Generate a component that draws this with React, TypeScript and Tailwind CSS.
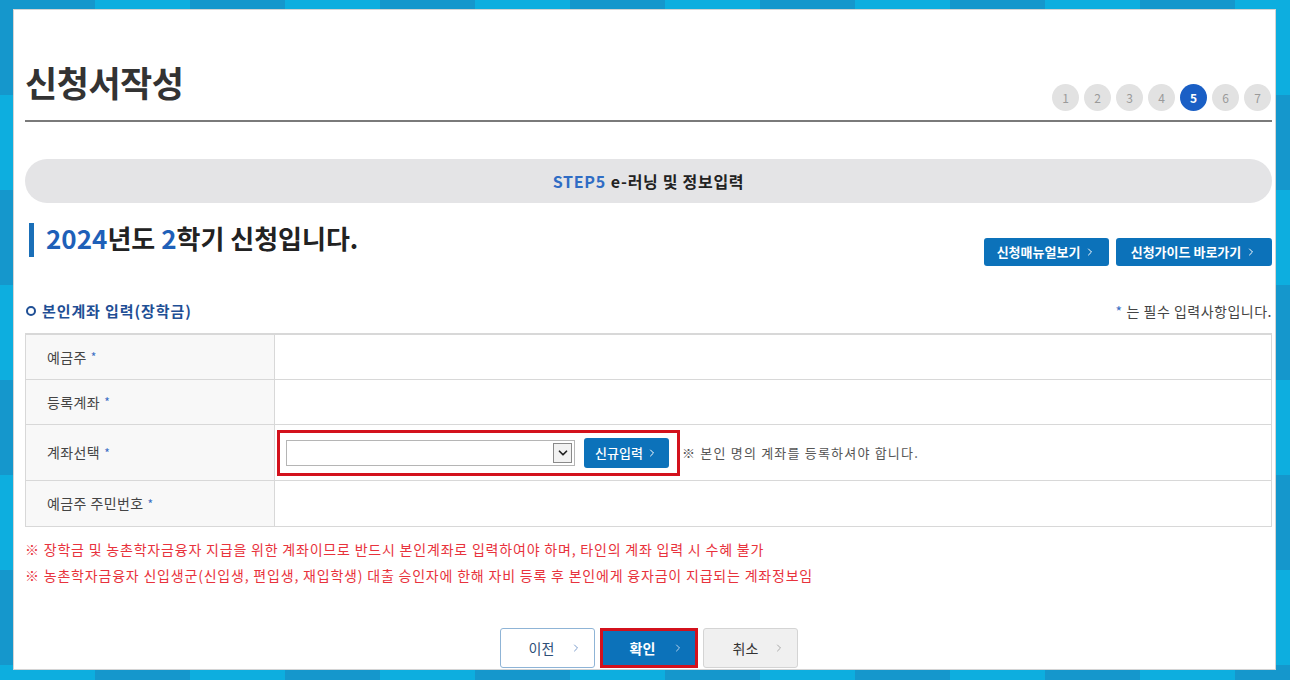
import { ChevronRight, ChevronDown } from 'lucide-react';

const steps = [1, 2, 3, 4, 5, 6, 7];

const rows = [
  { label: '예금주', h: 'h-[45px]' },
  { label: '등록계좌', h: 'h-[45px]' },
  { label: '계좌선택', h: 'h-[56px]', select: true },
  { label: '예금주 주민번호', h: 'h-[46px]' },
];

function Req() {
  return <span className="ml-1 text-[#3b6fc4] text-[12px]">*</span>;
}

export default function App() {
  return (
    <div
      className="w-[1290px] h-[680px] pt-[9px] pl-[13px] pr-[14px] pb-[10px] bg-[#1597cc] bg-[repeating-conic-gradient(#0daedf_0_25%,#1597cc_0_50%)] bg-[length:190px_190px]"
      style={{ fontFamily: '"Noto Sans CJK KR", "Noto Sans", sans-serif' }}
    >
      <div className="w-full h-full bg-white border border-[#d4d4d4] pl-[11px] pr-[3px] overflow-hidden">
        {/* Title */}
        <div className="mt-[52px] h-[60px] flex justify-between items-start border-b-2 border-[#7a7a7a]">
          <h1 className="text-[35px] leading-[40px] font-bold text-[#333] tracking-[-0.5px]">신청서작성</h1>
          <div className="mt-[22px] flex gap-[5px] pr-[1px]">
            {steps.map((s) => (
              <div
                key={s}
                className={`w-[27px] h-[27px] rounded-full flex items-center justify-center text-[12px] ${
                  s === 5 ? 'bg-[#1a5fc5] text-white font-bold' : 'bg-[#e2e2e2] text-[#9a9a9a]'
                }`}
              >
                {s}
              </div>
            ))}
          </div>
        </div>

        {/* Step bar */}
        <div className="mt-[37px] h-[44px] rounded-full bg-[#e4e4e6] flex items-center justify-center text-[16px] tracking-[0.7px] font-bold text-[#222]">
          <span className="text-[#2f6cc4] mr-[5px]">STEP5</span>
          e-러닝 및 정보입력
        </div>

        {/* Heading */}
        <div className="mt-[20px] h-[43px] flex justify-between">
          <div className="flex items-start">
            <div className="ml-[4px] w-[5px] h-[34px] bg-[#1a6fb8]" />
            <h2 className="ml-[12px] -mt-[3px] text-[26px] leading-[36px] font-bold text-[#222]">
              <span className="text-[#1e60b8]">2024</span>년도 <span className="text-[#1e60b8]">2</span>학기 신청입니다.
            </h2>
          </div>
          <div className="self-end flex gap-[7px]">
            <button className="h-[28px] w-[125px] rounded-[3px] bg-[#0c72ba] text-white text-[13px] font-bold flex items-center justify-center gap-[4px]">
              신청매뉴얼보기 <ChevronRight className="w-3 h-3" />
            </button>
            <button className="h-[28px] w-[156px] rounded-[3px] bg-[#0c72ba] text-white text-[13px] font-bold flex items-center justify-center gap-[4px]">
              신청가이드 바로가기 <ChevronRight className="w-3 h-3" />
            </button>
          </div>
        </div>

        {/* Section header */}
        <div className="mt-[34px] h-[22px] flex items-center justify-between">
          <div className="flex items-center text-[15px] tracking-[0.9px] font-bold text-[#1f4f95]">
            <span className="ml-[1px] w-[10px] h-[10px] rounded-full border-[2.5px] border-[#1f4f95]" />
            <span className="ml-[6px]">본인계좌 입력(장학금)</span>
          </div>
          <div className="text-[14px] tracking-[0.5px] text-[#444]">
            <span className="text-[#3b6fc4] mr-[4px]">*</span>는 필수 입력사항입니다.
          </div>
        </div>

        {/* Table */}
        <div className="mt-[11px] border-t-2 border-[#333] border-l border-r border-[#d8d8d8]">
          {rows.map((r) => (
            <div key={r.label} className={`${r.h} flex border-b border-[#d8d8d8]`}>
              <div className="w-[249px] bg-[#f8f8f8] border-r border-[#d8d8d8] flex items-center pl-[21px] text-[14px] tracking-[0.4px] text-[#444]">
                {r.label}
                <Req />
              </div>
              <div className="flex-1 flex items-center">
                {r.select && (
                  <>
                    <div className="ml-[2px] h-[46px] w-[403px] border-[3px] border-[#d3111c] flex items-center pl-[6px] pr-[8px] gap-[9px]">
                      <div className="h-[26px] w-[289px] border border-[#b5b5b5] bg-white flex items-center justify-end pr-[2px]">
                        <div className="w-[19px] h-[20px] border border-[#8a8a8a] bg-[#f2f2f2] flex items-center justify-center">
                          <ChevronDown className="w-[14px] h-[14px] text-[#222]" strokeWidth={3} />
                        </div>
                      </div>
                      <button className="h-[30px] w-[85px] rounded-[3px] bg-[#0c72ba] text-white text-[13px] font-medium flex items-center justify-center gap-[3px]">
                        신규입력 <ChevronRight className="w-3 h-3" />
                      </button>
                    </div>
                    <span className="ml-[2px] text-[13px] tracking-[1.2px] text-[#555]">※ 본인 명의 계좌를 등록하셔야 합니다.</span>
                  </>
                )}
              </div>
            </div>
          ))}
        </div>

        {/* Notes */}
        <div className="mt-[9px] text-[14px] tracking-[0.8px] leading-[26px] text-[#e8323c]">
          <p>※ 장학금 및 농촌학자금융자 지급을 위한 계좌이므로 반드시 본인계좌로 입력하여야 하며, 타인의 계좌 입력 시 수혜 불가</p>
          <p>※ 농촌학자금융자 신입생군(신입생, 편입생, 재입학생) 대출 승인자에 한해 자비 등록 후 본인에게 융자금이 지급되는 계좌정보임</p>
        </div>

        {/* Bottom buttons */}
        <div className="mt-[40px] flex justify-center gap-[5px]">
          <button className="h-[40px] w-[95px] rounded-[3px] border border-[#8fb4d6] bg-white flex items-center justify-between pl-[28px] pr-[12px] text-[14px] text-[#2d4f78]">
            이전 <ChevronRight className="w-3 h-3 text-[#7a9ccc]" />
          </button>
          <button className="h-[40px] w-[98px] border-[3px] border-[#d3111c] bg-[#0c72ba] flex items-center justify-between pl-[27px] pr-[11px] text-[14px] text-white font-bold">
            확인 <ChevronRight className="w-3 h-3 text-[#b8d4ee]" />
          </button>
          <button className="h-[40px] w-[95px] rounded-[3px] border border-[#d4d4d4] bg-[#f0f0f0] flex items-center justify-between pl-[29px] pr-[12px] text-[14px] text-[#333]">
            취소 <ChevronRight className="w-3 h-3 text-[#aaa]" />
          </button>
        </div>
      </div>
    </div>
  );
}
